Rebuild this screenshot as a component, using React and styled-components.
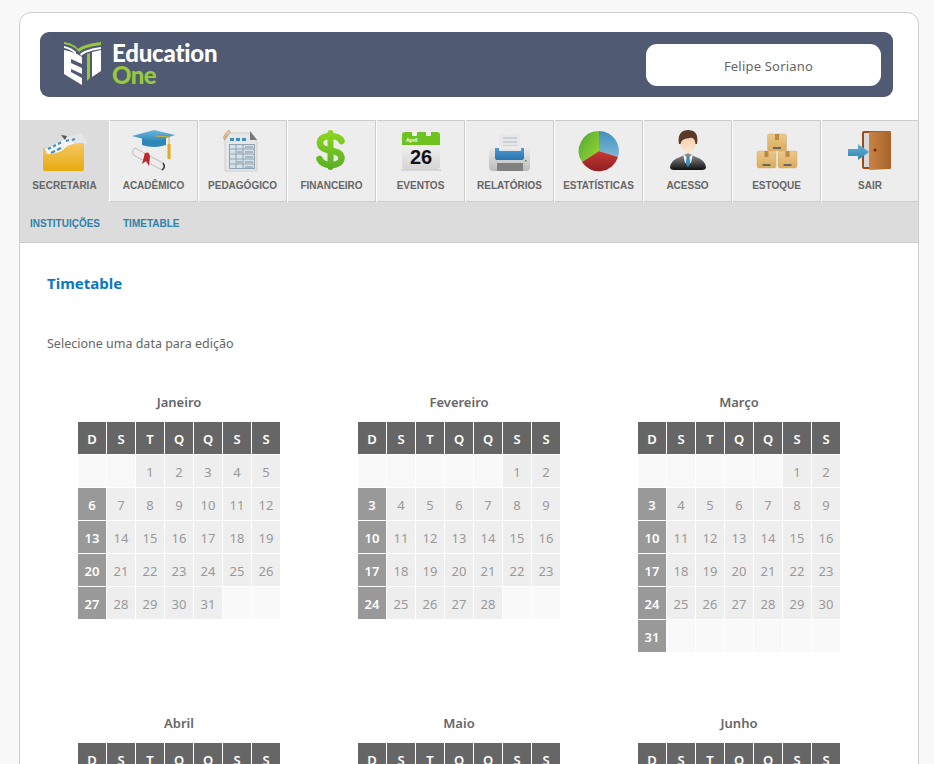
import React from "react";
import styled, { createGlobalStyle } from "styled-components";

const Global = createGlobalStyle`
  html, body { margin: 0; padding: 0; background: #f8f8f8; height: 764px; overflow: hidden; }
  body { font-family: "Noto Sans", sans-serif; }
`;

const Page = styled.div`
  height: 764px;
  overflow: hidden;
  padding: 12px 0 0 19px;
  box-sizing: border-box;
`;
const Card = styled.div`
  width: 900px;
  box-sizing: border-box;
  background: #fff;
  border: 1px solid #ccc;
  border-radius: 12px 12px 0 0;
`;
const Header = styled.header`
  margin: 19px 25px 23px 20px;
  height: 65px;
  background: #505a73;
  border-radius: 9px;
  display: flex;
  align-items: center;
  justify-content: space-between;
  padding: 0 12px 0 24px;
`;
const Brand = styled.div`
  display: flex;
  align-items: center;
  gap: 10px;
  margin-top: -1px;
`;
const BrandText = styled.div`
  font-family: "Lato", sans-serif;
  font-weight: 900;
  font-size: 24px;
  line-height: 22px;
  letter-spacing: -0.2px;
  color: #fff;
  span { display: block; color: #97c93d; letter-spacing: -0.6px; }
`;
const UserPill = styled.div`
  width: 235px;
  height: 42px;
  background: #fff;
  border-radius: 11px;
  display: flex;
  align-items: center;
  justify-content: center;
  padding: 2px 0 0 10px;
  box-sizing: border-box;
  color: #666;
  font-size: 13px;
  letter-spacing: 0.2px;
`;
const Tabs = styled.nav`
  display: flex;
  height: 82px;
`;
const Tab = styled.a`
  width: ${(p) => (p.$wide ? "96px" : p.$active ? "89px" : "88px")};
  margin-right: ${(p) => (p.$wide ? "0" : "1px")};
  box-sizing: border-box;
  background: ${(p) => (p.$active ? "#dcdcdc" : "#ededed")};
  border-top: 1px solid ${(p) => (p.$active ? "#dcdcdc" : "#ccc")};
  border-bottom: 1px solid ${(p) => (p.$active ? "#dcdcdc" : "#ccc")};
  border-right: ${(p) => (p.$active || p.$wide ? "0" : "1px solid #ccc")};
  display: flex;
  flex-direction: column;
  align-items: center;
  padding-top: 9px;
  font: bold 10px "Liberation Sans", sans-serif;
  color: #666;
  svg { display: block; width: 48px; height: 42px; margin-bottom: 8px; }
`;
const SubBar = styled.div`
  height: 41px;
  box-sizing: border-box;
  background: #dcdcdc;
  border-bottom: 1px solid #ccc;
  display: flex;
  align-items: center;
  gap: 23px;
  padding: 3px 0 0 10px;
`;
const SubLink = styled.a`
  font: bold 10px "Liberation Sans", sans-serif;
  color: #2f82aa;
`;
const Content = styled.main`
  padding: 31px 27px 0;
`;
const Title = styled.h1`
  margin: 0;
  font-size: 15px;
  line-height: 18px;
  font-weight: bold;
  color: #0a78c1;
`;
const Hint = styled.p`
  margin: 44px 0 0;
  font-size: 12.5px;
  line-height: 16px;
  color: #666;
`;
const Months = styled.div`
  display: grid;
  grid-template-columns: repeat(3, 202px);
  column-gap: 78px;
  row-gap: 63px;
  margin: 42px 0 0 31px;
  align-items: start;
`;
const MonthBox = styled.section`
  min-height: 258px;
`;
const MonthName = styled.h2`
  margin: 0 0 12px;
  font-size: 13px;
  line-height: 16px;
  font-weight: 600;
  color: #666;
  text-align: center;
`;
const Grid = styled.div`
  display: grid;
  grid-template-columns: repeat(7, 28px);
  grid-auto-rows: 32px;
  gap: 1px;
`;
const Cell = styled.div`
  display: flex;
  align-items: center;
  justify-content: center;
  font-size: 13px;
  padding-top: 1px;
  box-sizing: border-box;
  background: ${(p) => ({ head: "#666", sunday: "#999", empty: "#f9f9f9" }[p.$kind] || "#eee")};
  color: ${(p) => (p.$kind === "head" || p.$kind === "sunday" ? "#fff" : "#999")};
  font-weight: ${(p) => (p.$kind === "head" || p.$kind === "sunday" ? "600" : "normal")};
`;

const Logo = () => (
  <svg width="38" height="46" viewBox="0 0 38 46">
    <path d="M0 1 C6 2 11 4 14 8 C19 4 28 2 37 1 L37 4 C28 5 20 7 15 11 C11 6 6 4 0 3Z" fill="#97c93d" />
    <path d="M0 5 C5 6 9 8 12 11 L12 14 C9 10 5 8 0 7Z" fill="#fff" />
    <path d="M16 13 C21 9 29 7 37 6 L37 8 C29 9 22 11 17 15Z" fill="#fff" />
    <path d="M0 9 L0 33 L18 44 L18 37 L7 31 L7 28 L18 33 L18 27 L7 22 L7 18 L18 23 L18 16 C12 12 6 10 0 9Z" fill="#fff" />
    <path d="M28 11 L37 9 L37 30 L28 36Z" fill="#fff" />
    <path d="M23 13 L26 12 L26 37 L23 40Z" fill="#97c93d" />
  </svg>
);

const FolderIcon = () => (
  <svg viewBox="0 0 48 42">
    <defs>
      <linearGradient id="fold" x1="0" y1="0" x2="0" y2="1">
        <stop offset="0" stopColor="#f5c765" />
        <stop offset="1" stopColor="#e8aa0e" />
      </linearGradient>
    </defs>
    <g transform="translate(-2 0)">
      <path d="M22 9 L42 3 L49 13 L30 24Z" fill="#e6e6e6" />
      <path d="M5 19 L29 7 L38 16 L14 30Z" fill="#f4f4f4" stroke="#ccc" strokeWidth=".5" />
      <path d="M9 19 l3-1.500 M14 16.500 l3-1.500 M19 14 l3-1.500 M27 11 l3-1 M33 10 l3-1 M12 23 l4-2 M18 20 l4-2" stroke="#3d8fc6" strokeWidth="2" />
      <path d="M22 5 l6 1 l-2 4z" fill="#555" />
      <path d="M4 19 C4 17 5 17 6 19 L7 24 C16 24 22 22 26 18 C30 14 38 13 44 13 Q45 13 45 15 L45 39 Q45 41 43 41 L6 41 Q4 41 4 39Z" fill="url(#fold)" />
    </g>
  </svg>
);

const CapIcon = () => (
  <svg viewBox="0 0 48 42">
    <defs>
      <linearGradient id="cap" x1="0" y1="0" x2="0" y2="1">
        <stop offset="0" stopColor="#6cb7dc" />
        <stop offset="1" stopColor="#2d84b8" />
      </linearGradient>
    </defs>
    <path d="M12 7 L12 15 Q24 19 36 15 L36 7Z" fill="#2f86ba" />
    <path d="M2 6 L24 0 L45 5 L25 12Z" fill="url(#cap)" />
    <path d="M25 6 L39 7 L39 15" fill="none" stroke="#d5ad2f" strokeWidth="1" />
    <rect x="37.5" y="14" width="3" height="15" fill="#e4a81f" />
    <path d="M5 18 L33 33 Q35 37 32 40 L5 26 Q0 22 5 18Z" fill="#ececec" stroke="#aaa" strokeWidth=".7" />
    <path d="M32 40 Q36 37 33 33" fill="none" stroke="#444" strokeWidth="1.6" />
    <path d="M15 23 L20 26 L19 36 L16 31 L12 34Z" fill="#b9262c" />
    <circle cx="17" cy="25" r="2.500" fill="#c12b30" />
  </svg>
);

const SheetIcon = () => (
  <svg viewBox="0 0 48 42">
    <path d="M6 3 L32 3 L38 10 L38 41 L6 41Z" fill="#e6e6e6" stroke="#d0d0d0" />
    <path d="M31 1 L38 10 L31 10Z" fill="#777" />
    <rect x="11" y="8" width="4" height="3" fill="#3d8fc6" />
    <rect x="17" y="8" width="4" height="3" fill="#3d8fc6" />
    <rect x="23" y="8" width="4" height="3" fill="#3d8fc6" />
    <rect x="10.500" y="14.500" width="25" height="24" fill="#d6e2ea" stroke="#8ea4b4" />
    <path d="M11 19 H36 M11 24 H36 M11 29 H36 M11 34 H36 M17 14 V39 M24 14 V39" stroke="#8ea4b4" strokeWidth="1" />
    <path d="M26 17 h8 M26 22 h8 M26 27 h8 M26 32 h8 M26 37 h8 M18 22 h5 M18 32 h5" stroke="#888" strokeWidth="1.2" />
    <path d="M4 8 L9 1 Q11 0 11 2 L6 9 Q5 10 5 9 L9 4" fill="none" stroke="#d8a873" strokeWidth="1.2" />
  </svg>
);

const DollarIcon = () => (
  <svg viewBox="0 0 48 42">
    <defs>
      <linearGradient id="dol" gradientUnits="userSpaceOnUse" x1="0" y1="0" x2="0" y2="40">
        <stop offset="0" stopColor="#8fd820" />
        <stop offset="1" stopColor="#58ad25" />
      </linearGradient>
    </defs>
    <g transform="translate(-1.500 0)">
      <rect x="21" y="0" width="6" height="40" rx="3" fill="url(#dol)" />
      <path d="M35 11 C33 7 28 6 24 6 C17 6 13.500 9 13.500 13 C13.500 18 18 19.500 24 20.500 C30 21.500 35 23 35 28 C35 32 31 35 24 35 C19 35 15 33 13 29" fill="none" stroke="url(#dol)" strokeWidth="6.500" strokeLinecap="round" />
    </g>
  </svg>
);

const CalendarIcon = () => (
  <svg viewBox="0 0 48 42">
    <defs>
      <linearGradient id="calb" x1="0" y1="0" x2="0" y2="1">
        <stop offset="0" stopColor="#fff" />
        <stop offset="1" stopColor="#d5d5d5" />
      </linearGradient>
    </defs>
    <rect x="5" y="2" width="38" height="37" rx="3" fill="url(#calb)" />
    <path d="M5 15 V5 Q5 2 8 2 H40 Q43 2 43 5 V15Z" fill="#6fc31f" />
    <rect x="15" y="0" width="5" height="6" rx="1" fill="#eee" />
    <rect x="29" y="0" width="5" height="6" rx="1" fill="#eee" />
    <text x="9" y="12" fontFamily="Liberation Sans" fontSize="5" fontWeight="bold" fill="#fff">April</text>
    <text x="24" y="34" textAnchor="middle" fontFamily="Liberation Sans" fontSize="20" fontWeight="bold" fill="#111">26</text>
    <path d="M4 40 H44" stroke="#ccc" strokeWidth="1.500" />
  </svg>
);

const PrinterIcon = () => (
  <svg viewBox="0 0 48 42">
    <defs>
      <linearGradient id="pr" x1="0" y1="0" x2="0" y2="1">
        <stop offset="0" stopColor="#eee" />
        <stop offset="1" stopColor="#bbb" />
      </linearGradient>
      <linearGradient id="prb" x1="0" y1="0" x2="0" y2="1">
        <stop offset="0" stopColor="#4d9bd5" />
        <stop offset="1" stopColor="#2a74ad" />
      </linearGradient>
    </defs>
    <path d="M14 4 H33 L36 22 H11Z" fill="#e8e8e8" />
    <path d="M17 8 H31 M17 12 H31 M17 16 H31" stroke="#bfc8d0" strokeWidth="1.600" />
    <rect x="3" y="16" width="41" height="25" rx="4" fill="url(#pr)" />
    <path d="M9 18 H13 V21 H35 V18 H38 V28 Q38 30 36 30 H11 Q9 30 9 28Z" fill="url(#prb)" />
    <rect x="11" y="33" width="26" height="8" fill="#808080" />
    <rect x="39" y="30" width="1.500" height="1.500" fill="#3a9d3a" />
  </svg>
);

const PieIcon = () => (
  <svg viewBox="0 0 48 42">
    <defs>
      <linearGradient id="pg" x1="0" y1="0" x2="1" y2="1">
        <stop offset="0" stopColor="#4da33a" />
        <stop offset="1" stopColor="#9ddc2b" />
      </linearGradient>
      <linearGradient id="pb" x1="0" y1="0" x2="0" y2="1">
        <stop offset="0" stopColor="#3f8fb8" />
        <stop offset="1" stopColor="#7fb8d8" />
      </linearGradient>
      <linearGradient id="pr2" x1="0" y1="0" x2="0" y2="1">
        <stop offset="0" stopColor="#c63a35" />
        <stop offset="1" stopColor="#8f1f22" />
      </linearGradient>
    </defs>
    <path d="M24 21 L24 1 A20 20 0 0 0 7 32Z" fill="url(#pg)" />
    <path d="M24 21 L24 1 A20 20 0 0 1 43 27Z" fill="url(#pb)" />
    <path d="M24 21 L43 27 A20 20 0 0 1 7 32Z" fill="url(#pr2)" />
  </svg>
);

const PersonIcon = () => (
  <svg viewBox="0 0 48 42">
    <defs>
      <linearGradient id="suit" x1="0" y1="0" x2="0" y2="1">
        <stop offset="0" stopColor="#9a9a9a" />
        <stop offset="1" stopColor="#111" />
      </linearGradient>
      <linearGradient id="face" x1="0" y1="0" x2="0" y2="1">
        <stop offset="0" stopColor="#f0c7a0" />
        <stop offset="1" stopColor="#fbe6d2" />
      </linearGradient>
    </defs>
    <path d="M6 37 Q7 30 16 27 L24 23 L32 27 Q41 30 42 37 Q42 40 38 40 H10 Q6 40 6 37Z" fill="url(#suit)" />
    <path d="M19 24 L24 28 L29 24 L27 33 H21Z" fill="#f2f2f2" />
    <path d="M22.500 27 H25.500 L26 34 L24 37 L22 34Z" fill="#2f8fc0" />
    <ellipse cx="24" cy="12" rx="8" ry="11" fill="url(#face)" />
    <path d="M15 14 C13 3 19 0 24 0 C30 0 35 3 33 14 L31.500 14 C31 9 29 7 26 8 C22 9 18 8 16.500 14Z" fill="#5a3a26" />
  </svg>
);

const Box = ({ x, y }) => (
  <g transform={`translate(${x} ${y})`}>
    <rect width="19" height="17" rx="2" fill="url(#bx)" stroke="#d2ad6e" strokeWidth=".5" />
    <rect x="7.500" y="0" width="4" height="6" fill="#b98b45" />
    <rect x="5.500" y="13" width="8" height="2" fill="#666" />
  </g>
);
const BoxesIcon = () => (
  <svg viewBox="0 0 48 42">
    <defs>
      <linearGradient id="bx" x1="0" y1="0" x2="0" y2="1">
        <stop offset="0" stopColor="#e9c98b" />
        <stop offset="1" stopColor="#dcab5a" />
      </linearGradient>
    </defs>
    <Box x={14.500} y={4} />
    <Box x={4} y={21} />
    <Box x={25} y={21} />
  </svg>
);

const DoorIcon = () => (
  <svg viewBox="0 0 48 42">
    <defs>
      <linearGradient id="dr" x1="0" y1="0" x2="1" y2="0">
        <stop offset="0" stopColor="#c98344" />
        <stop offset="1" stopColor="#a8632a" />
      </linearGradient>
      <linearGradient id="ar" x1="0" y1="0" x2="0" y2="1">
        <stop offset="0" stopColor="#63b1d6" />
        <stop offset="1" stopColor="#3385b0" />
      </linearGradient>
    </defs>
    <rect x="16" y="1" width="29" height="38" rx="2" fill="#9c4a18" />
    <rect x="18" y="3" width="25" height="34" fill="#d9d9d9" />
    <path d="M23 2 L44 1 Q45 1 45 3 L45 38 Q45 39 43 39 L23 40Z" fill="url(#dr)" />
    <circle cx="29" cy="20" r="1.500" fill="#7a1f0a" />
    <path d="M2 19 H12 V14 L23 22 L12 30 V26 H2Z" fill="url(#ar)" />
  </svg>
);

const tabs = [
  { label: "SECRETARIA", Icon: FolderIcon, active: true },
  { label: "ACADÊMICO", Icon: CapIcon },
  { label: "PEDAGÓGICO", Icon: SheetIcon },
  { label: "FINANCEIRO", Icon: DollarIcon },
  { label: "EVENTOS", Icon: CalendarIcon },
  { label: "RELATÓRIOS", Icon: PrinterIcon },
  { label: "ESTATÍSTICAS", Icon: PieIcon },
  { label: "ACESSO", Icon: PersonIcon },
  { label: "ESTOQUE", Icon: BoxesIcon },
  { label: "SAIR", Icon: DoorIcon, wide: true },
];

const monthNames = ["Janeiro", "Fevereiro", "Março", "Abril", "Maio", "Junho"];
const weekDays = ["D", "S", "T", "Q", "Q", "S", "S"];

function Month({ index }) {
  const first = new Date(2013, index, 1).getDay();
  const total = new Date(2013, index + 1, 0).getDate();
  const cells = [];
  for (let i = 0; i < first; i++) cells.push(null);
  for (let d = 1; d <= total; d++) cells.push(d);
  while (cells.length % 7) cells.push(null);
  return (
    <MonthBox>
      <MonthName>{monthNames[index]}</MonthName>
      <Grid>
        {weekDays.map((d, i) => (
          <Cell key={i} $kind="head">{d}</Cell>
        ))}
        {cells.map((d, i) => (
          <Cell key={i} $kind={d === null ? "empty" : i % 7 === 0 ? "sunday" : "day"}>{d}</Cell>
        ))}
      </Grid>
    </MonthBox>
  );
}

export default function App() {
  return (
    <Page>
      <Global />
      <Card>
        <Header>
          <Brand>
            <Logo />
            <BrandText>
              Education
              <span>One</span>
            </BrandText>
          </Brand>
          <UserPill>Felipe Soriano</UserPill>
        </Header>
        <Tabs>
          {tabs.map(({ label, Icon, active, wide }) => (
            <Tab key={label} $active={active} $wide={wide}>
              <Icon />
              {label}
            </Tab>
          ))}
        </Tabs>
        <SubBar>
          <SubLink>INSTITUIÇÕES</SubLink>
          <SubLink>TIMETABLE</SubLink>
        </SubBar>
        <Content>
          <Title>Timetable</Title>
          <Hint>Selecione uma data para edição</Hint>
          <Months>
            {monthNames.map((m, i) => (
              <Month key={m} index={i} />
            ))}
          </Months>
        </Content>
      </Card>
    </Page>
  );
}
